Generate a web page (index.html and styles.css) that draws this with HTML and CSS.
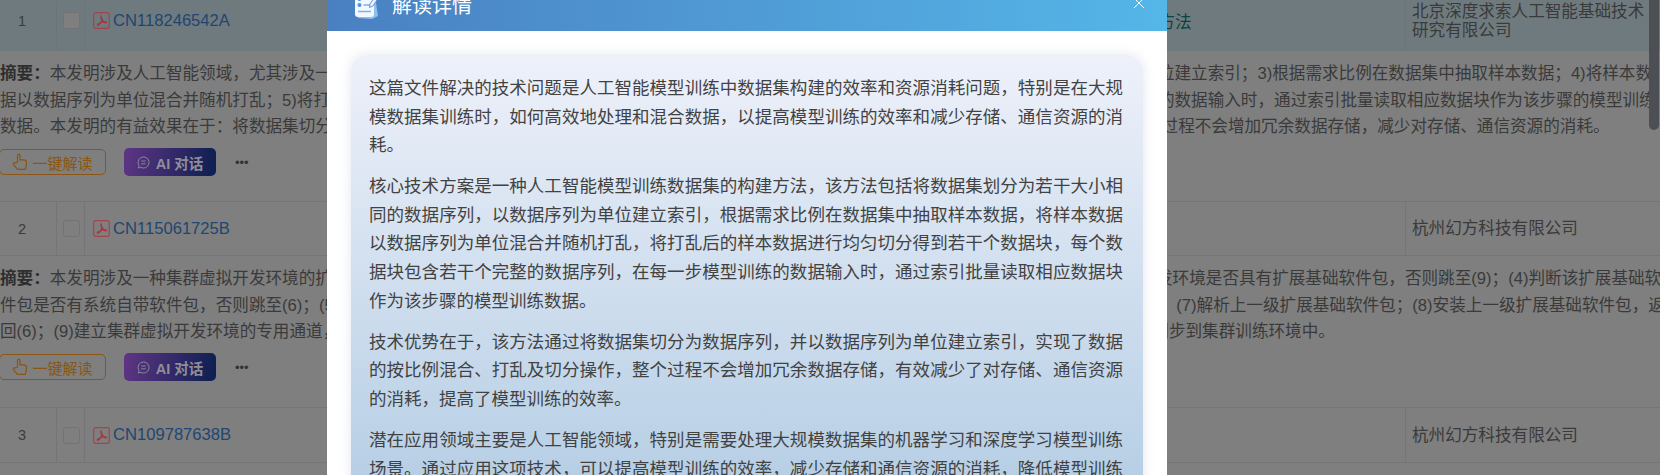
FILE: index.html
```html
<!DOCTYPE html>
<html lang="zh-CN">
<head>
<meta charset="utf-8">
<title>解读详情</title>
<link rel="stylesheet" href="styles.css">
</head>
<body>
<main class="results">
  <div class="row row-first row-active">
    <div class="cell cell-num">1</div>
    <div class="cell cell-check"><span class="checkbox"></span></div>
    <div class="cell cell-pn"><svg class="pdf" viewBox="0 0 17 17"><rect x=".7" y=".7" width="15.6" height="15.6" rx="2"/><path d="M8.3 3.4c-.6 0-.4 2.4.2 3.8.7 1.7-1.700 5.300-3.500 6-.9.3-1.100-.7.2-1.400 1.800-1 4.700-2 7.600-1.800.9.100.8 1-.2.8-1.500-.3-3.300-2.500-4-4.500-.4-1.300-.8-2.900-.3-2.900z"/></svg><a class="pn-link">CN118246542A</a></div>
    <div class="cell cell-title">一种人工智能模型训练数据集的构建方法</div>
    <div class="cell cell-org">北京深度求索人工智能基础技术研究有限公司</div>
  </div>
  <section class="abstract abstract-first">
    <p class="line"><b>摘要：</b>本发明涉及人工智能领域，尤其涉及一种人工智能模型训练数据集的构建方法，包括以下步骤：1)将数据集划分为若干相同数据序列；2)以数据序列为单位建立索引；3)根据需求比例在数据集中抽取样本数据；4)将样本数</p>
    <p class="line">据以数据序列为单位混合并随机打乱；5)将打乱后的样本数据进行均匀切分得到所述若干数据块，每个数据块包含若干个完整的数据序列；6)在每一步模型训练的数据输入时，通过索引批量读取相应数据块作为该步骤的模型训练</p>
    <p class="line">数据。本发明的有益效果在于：将数据集切分为数据序列，并以数据序列为单位建立索引，从而实现数据的高效快速按比例混合、打乱以及切分操作，整个处理过程不会增加冗余数据存储，减少对存储、通信资源的消耗。</p>
    <div class="actions">
      <button class="btn-read"><svg viewBox="0 0 16 18"><path d="M5.500 9V2.300c0-1.700 2.500-1.700 2.500 0v4.500h3.500c1.900 0 3 1 3 2.700 0 2-.4 4.200-1.200 6.800H5.500L1.700 11.800c-1-1.300.8-3 2-1.800z"/></svg>一键解读</button>
      <button class="btn-ai"><svg viewBox="0 0 14 14"><path d="M7 1a6 6 0 1 1-3 11.200L1.400 13l.8-2.600A6 6 0 0 1 7 1zM4.600 5.400h4.800M4.600 8.400h4.800"/></svg>AI 对话</button>
      <span class="more">•••</span>
    </div>
  </section>
  <div class="row row-second">
    <div class="cell cell-num">2</div>
    <div class="cell cell-check"><span class="checkbox"></span></div>
    <div class="cell cell-pn"><svg class="pdf" viewBox="0 0 17 17"><rect x=".7" y=".7" width="15.6" height="15.6" rx="2"/><path d="M8.3 3.4c-.6 0-.4 2.4.2 3.8.7 1.7-1.700 5.300-3.500 6-.9.3-1.100-.7.2-1.400 1.800-1 4.700-2 7.600-1.800.9.100.8 1-.2.8-1.500-.3-3.300-2.500-4-4.500-.4-1.300-.8-2.900-.3-2.900z"/></svg><a class="pn-link">CN115061725B</a></div>
    <div class="cell cell-title"></div>
    <div class="cell cell-org">杭州幻方科技有限公司</div>
  </div>
  <section class="abstract abstract-second">
    <p class="line"><b>摘要：</b>本发明涉及一种集群虚拟开发环境的扩展基础软件包安装方法，包括以下步骤：(1)建立集群虚拟开发环境；(2)获取安装基础软件包；(3)判断集群虚拟开发环境是否具有扩展基础软件包，否则跳至(9)；(4)判断该扩展基础软</p>
    <p class="line">件包是否有系统自带软件包，否则跳至(6)；(5)卸载系统自带软件包并清理残留配置文件；(6)判断是否存在上一级扩展基础软件包，若存在则继续，否则跳至(9)；(7)解析上一级扩展基础软件包；(8)安装上一级扩展基础软件包，返</p>
    <p class="line">回(6)；(9)建立集群虚拟开发环境的专用通道，通过专用通道将集群虚拟开发环境中已经安装完成的基础软件包及其相关依赖文件、配置信息以及运行环境变量同步到集群训练环境中。</p>
    <div class="actions">
      <button class="btn-read"><svg viewBox="0 0 16 18"><path d="M5.500 9V2.300c0-1.700 2.500-1.700 2.500 0v4.500h3.500c1.900 0 3 1 3 2.700 0 2-.4 4.200-1.200 6.800H5.500L1.700 11.800c-1-1.300.8-3 2-1.800z"/></svg>一键解读</button>
      <button class="btn-ai"><svg viewBox="0 0 14 14"><path d="M7 1a6 6 0 1 1-3 11.200L1.400 13l.8-2.600A6 6 0 0 1 7 1zM4.600 5.400h4.800M4.600 8.400h4.800"/></svg>AI 对话</button>
      <span class="more">•••</span>
    </div>
  </section>
  <div class="row row-third">
    <div class="cell cell-num">3</div>
    <div class="cell cell-check"><span class="checkbox"></span></div>
    <div class="cell cell-pn"><svg class="pdf" viewBox="0 0 17 17"><rect x=".7" y=".7" width="15.6" height="15.6" rx="2"/><path d="M8.3 3.4c-.6 0-.4 2.4.2 3.8.7 1.7-1.700 5.300-3.500 6-.9.3-1.100-.7.2-1.400 1.800-1 4.700-2 7.600-1.800.9.100.8 1-.2.8-1.500-.3-3.300-2.500-4-4.500-.4-1.300-.8-2.900-.3-2.900z"/></svg><a class="pn-link">CN109787638B</a></div>
    <div class="cell cell-title"></div>
    <div class="cell cell-org">杭州幻方科技有限公司</div>
  </div>
</main>

<div class="page-scrollbar"></div>

<aside class="modal">
  <header class="modal-head">
    <svg class="modal-icon" viewBox="0 0 26 28">
      <path class="ic-back" d="M4 8l18-4 3 20-6 3-14-1z"/>
      <rect class="ic-doc" x="2" y="2" width="19" height="23" rx="3"/>
      <circle class="ic-dot" cx="6.500" cy="7" r="2"/><circle class="ic-dot" cx="6.500" cy="13" r="2"/>
      <path class="ic-line" d="M10.500 7h7M10.500 13h7M5 19.500h13"/>
      <path class="ic-pen" d="M17 12L23 3l3 2-6 9-3.500 1.500z"/>
    </svg>
    <h2 class="modal-title">解读详情</h2>
    <svg class="modal-close" viewBox="0 0 12 12"><path d="M1 1l10 10M11 1L1 11"/></svg>
  </header>
  <div class="modal-body">
    <article class="card">
      <p>这篇文件解决的技术问题是人工智能模型训练中数据集构建的效率和资源消耗问题，特别是在大规模数据集训练时，如何高效地处理和混合数据，以提高模型训练的效率和减少存储、通信资源的消耗。</p>
      <p>核心技术方案是一种人工智能模型训练数据集的构建方法，该方法包括将数据集划分为若干大小相同的数据序列，以数据序列为单位建立索引，根据需求比例在数据集中抽取样本数据，将样本数据以数据序列为单位混合并随机打乱，将打乱后的样本数据进行均匀切分得到若干个数据块，每个数据块包含若干个完整的数据序列，在每一步模型训练的数据输入时，通过索引批量读取相应数据块作为该步骤的模型训练数据。</p>
      <p>技术优势在于，该方法通过将数据集切分为数据序列，并以数据序列为单位建立索引，实现了数据的按比例混合、打乱及切分操作，整个过程不会增加冗余数据存储，有效减少了对存储、通信资源的消耗，提高了模型训练的效率。</p>
      <p>潜在应用领域主要是人工智能领域，特别是需要处理大规模数据集的机器学习和深度学习模型训练场景。通过应用这项技术，可以提高模型训练的效率，减少存储和通信资源的消耗，降低模型训练的成本。</p>
    </article>
  </div>
</aside>
</body>
</html>
```

FILE: styles.css
```css
* { box-sizing: border-box; }

html, body {
  margin: 0;
  height: 100%;
  overflow: hidden;
}

body {
  background: #7f7f7f;
  color: #3a3a3a;
  font-family: "Liberation Sans", "Noto Sans CJK SC", sans-serif;
  font-size: 16.6px;
}

.results {
  margin-top: -9px;
  width: 1660px;
}

.row {
  display: grid;
  grid-template-columns: 57px 28px 805px 516px 1fr;
  border-bottom: 1px solid #757578;
}

.row-first { height: 60px; }
.row-second { height: 55px; border-top: 1px solid #757578; }
.row-third { height: 56px; border-top: 1px solid #757578; }

.row-active {
  background: #6f7a7e;
  border-bottom-color: #6f7a7e;
}

.cell {
  display: flex;
  align-items: center;
  min-width: 0;
  border-right: 1px solid #757578;
}

.row-active .cell { border-right-color: #6b7578; }

.cell-num {
  justify-content: center;
  padding-right: 12px;
  font-size: 14.5px;
}

.cell-check { justify-content: center; padding-left: 2px; }

.checkbox {
  width: 17px;
  height: 17px;
  background: #7f7f7f;
  border: 1px solid #717376;
  border-radius: 3px;
}

.cell-pn { padding-left: 8px; gap: 3px; border-right: 0; }

.pdf { width: 17px; height: 17px; flex: none; }
.pdf rect { fill: none; stroke: #a3444c; stroke-width: 1.2; }
.pdf path { fill: none; stroke: #a3383f; stroke-width: 1.300; }

.pn-link { color: #214672; }

.cell-title {
  padding-left: 3px;
  color: #0a4446;
  border-right: 1px solid #6b7578;
  white-space: nowrap;
}

.row-second .cell-title, .row-third .cell-title { border-right-color: #757578; }

.cell-org {
  padding: 0 6px;
  border-right: 0;
  line-height: 19px;
}

.abstract { overflow: hidden; padding-top: 10px; }
.abstract-first { height: 150px; }
.abstract-second { height: 151px; }

.line {
  margin: 0;
  height: 26.7px;
  line-height: 26.7px;
  white-space: nowrap;
}

.line b { font-weight: 700; color: #2e2e2e; }

.actions {
  display: flex;
  align-items: center;
  gap: 18px;
  margin-top: 7px;
}

.btn-read, .btn-ai {
  display: flex;
  align-items: center;
  justify-content: center;
  padding: 0;
  font-family: inherit;
}

.btn-read {
  width: 107px;
  height: 26px;
  margin-left: -1px;
  gap: 4px;
  background: transparent;
  border: 1px solid #8c5714;
  border-radius: 5px;
  color: #8a5612;
  font-size: 15px;
}

.btn-read svg { width: 16px; height: 18px; fill: none; stroke: #8a5612; stroke-width: 1.200; }

.btn-ai {
  width: 92px;
  height: 28px;
  gap: 6px;
  background: linear-gradient(100deg, #5f3585, #0c1f50);
  border: 0;
  border-radius: 5px;
  color: #8e8e98;
  font-size: 14.500px;
  font-weight: 700;
}

.btn-ai svg { width: 13px; height: 13px; fill: none; stroke: #8e8e98; stroke-width: 1; }

.more {
  margin-left: 1px;
  color: #333;
  font-size: 13px;
  letter-spacing: 0;
}

.page-scrollbar {
  position: absolute;
  top: 0;
  right: 1px;
  width: 10px;
  height: 130px;
  background: #4c4f54;
  border-radius: 0 0 5px 5px;
}

.modal {
  position: absolute;
  top: -23px;
  left: 327px;
  width: 840px;
  background: #fff;
}

.modal-head {
  display: flex;
  align-items: center;
  height: 54px;
  padding: 0 22px 0 26px;
  background: linear-gradient(90deg, #4a80c2, #55b6e8);
}

.modal-icon { width: 26px; height: 28px; flex: none; margin-top: 3px; }
.ic-back { fill: #8ec0f0; }
.ic-doc { fill: #f3f8ff; }
.ic-dot { fill: #4d93e0; }
.ic-line { fill: none; stroke: #7eb2ea; stroke-width: 1.500; }
.ic-pen { fill: #e8f3ff; stroke: #4a80c2; stroke-width: .8; }

.modal-title {
  margin: 0 0 0 13px;
  flex: 1;
  color: #fff;
  font-size: 20px;
  font-weight: 400;
}

.modal-close {
  width: 12px;
  height: 12px;
  fill: none;
  stroke: #fff;
  stroke-width: 1;
  margin-top: -2px;
}

.modal-body { padding: 24px 24px 0; }

.card {
  padding: 19px 20px 20px 18px;
  border-radius: 16px;
  background: linear-gradient(180deg, #eef1fa 0, #b7cfe5 420px);
  box-shadow: 0 0 12px rgba(80, 100, 150, .16);
  color: #424242;
  font-size: 17.5px;
  line-height: 28.6px;
  text-align: justify;
}

.card p { margin: 0 0 12.500px; }
```
